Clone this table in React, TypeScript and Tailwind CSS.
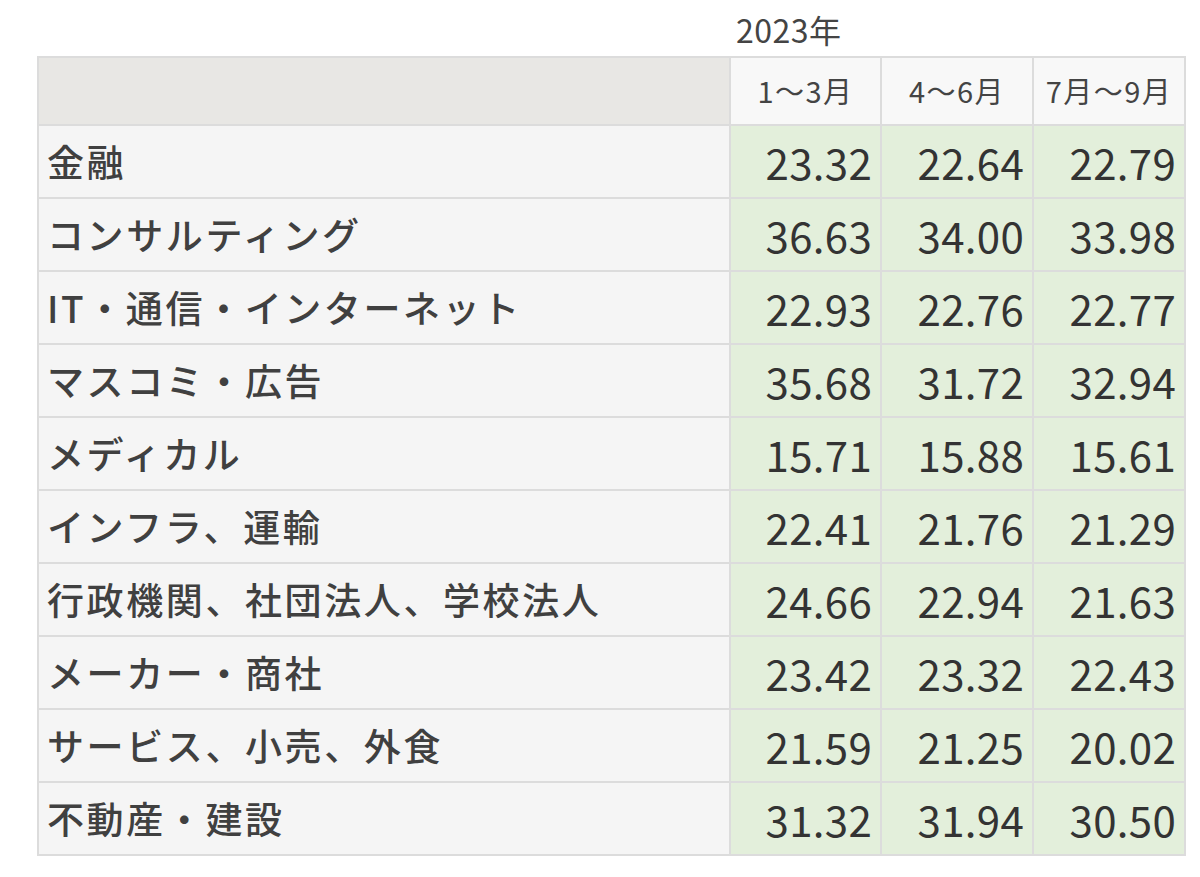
const rows: [string, string, string, string][] = [
  ["金融", "23.32", "22.64", "22.79"],
  ["コンサルティング", "36.63", "34.00", "33.98"],
  ["IT・通信・インターネット", "22.93", "22.76", "22.77"],
  ["マスコミ・広告", "35.68", "31.72", "32.94"],
  ["メディカル", "15.71", "15.88", "15.61"],
  ["インフラ、運輸", "22.41", "21.76", "21.29"],
  ["行政機関、社団法人、学校法人", "24.66", "22.94", "21.63"],
  ["メーカー・商社", "23.42", "23.32", "22.43"],
  ["サービス、小売、外食", "21.59", "21.25", "20.02"],
  ["不動産・建設", "31.32", "31.94", "30.50"],
];

const months = ["1〜3月", "4〜6月", "7月〜9月"];

export default function App() {
  return (
    <div
      className="min-h-screen bg-white pl-[37px] pt-[6px] text-[#333]"
      style={{ fontFamily: '"Noto Sans CJK JP", "Noto Sans", sans-serif' }}
    >
      <div className="ml-[699px] h-[50px] text-[32px] leading-[46px] tracking-[0.5px] text-[#444]">
        2023年
      </div>
      <div className="grid w-[1149px] grid-cols-[690px_149px_150px_150px] gap-[2px] bg-[#dcdcdc] p-[2px]">
        <div className="h-[66px] bg-[#e8e7e4]" />
        {months.map((m) => (
          <div
            key={m}
            className="flex h-[66px] items-center justify-center bg-[#f8f8f8] text-[29px] tracking-[1.5px] text-[#444]"
          >
            {m}
          </div>
        ))}
        {rows.map(([label, a, b, c]) => (
          <div key={label} className="contents">
            <div className="flex h-[71px] items-center bg-[#f5f5f5] pl-[8px] text-[37px] font-medium tracking-[2.6px] text-[#404040]">
              {label}
            </div>
            {[a, b, c].map((v, i) => (
              <div
                key={i}
                className="flex h-[71px] items-center justify-end bg-[#e3efdb] pr-[8px] text-[42px] tracking-[0.3px] text-[#333]"
              >
                {v}
              </div>
            ))}
          </div>
        ))}
      </div>
    </div>
  );
}
